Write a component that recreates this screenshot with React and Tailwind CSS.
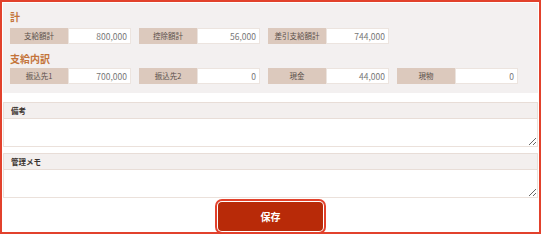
import React from "react";

const Field = ({ label, value }) => (
  <div className="flex h-[16px] w-[121px]">
    <div className="flex w-[58px] items-center justify-center bg-[#dcc9bd] text-[7.5px] text-[#5a4f4a]">
      {label}
    </div>
    <div className="flex flex-1 items-center justify-end border border-[#ece4df] bg-white pr-[3px] text-[8.5px] text-[#777]">
      {value}
    </div>
  </div>
);

const MemoBox = ({ title }) => (
  <div className="flex flex-col">
    <div className="flex h-[17px] items-center border border-[#e8ddd7] bg-[#f3efee] pl-[7px] text-[7.5px] font-bold text-[#3a3330]">
      {title}
    </div>
    <textarea className="h-[28px] resize-y border border-t-0 border-[#ebe1db] bg-white outline-none" />
  </div>
);

export default function App() {
  return (
    <div
      className="h-[234px] w-[541px] border-2 border-[#e2412c] bg-white p-px"
      style={{ fontFamily: '"Noto Sans CJK JP", "Noto Sans", sans-serif' }}
    >
      <div className="bg-[#f3f0f0] pb-[9px] pl-[7px] pt-[7px]">
        <div className="mb-[4px] h-[14px] text-[10px] font-bold leading-[14px] text-[#c4743a]">
          計
        </div>
        <div className="flex gap-[8px]">
          <Field label="支給額計" value="800,000" />
          <Field label="控除額計" value="56,000" />
          <Field label="差引支給額計" value="744,000" />
        </div>
        <div className="mb-[2px] mt-[8px] h-[14px] text-[10px] font-bold leading-[14px] text-[#c4743a]">
          支給内訳
        </div>
        <div className="flex gap-[8px]">
          <Field label="振込先1" value="700,000" />
          <Field label="振込先2" value="0" />
          <Field label="現金" value="44,000" />
          <Field label="現物" value="0" />
        </div>
      </div>
      <div className="mt-[9px] flex flex-col gap-[6px]">
        <MemoBox title="備考" />
        <MemoBox title="管理メモ" />
      </div>
      <div className="mt-[4px] flex justify-center">
        <button className="h-[29px] w-[105px] rounded-[4px] bg-[#b82a08] text-[10px] font-bold text-white ring-2 ring-[#e2412c] ring-offset-1">
          保存
        </button>
      </div>
    </div>
  );
}
